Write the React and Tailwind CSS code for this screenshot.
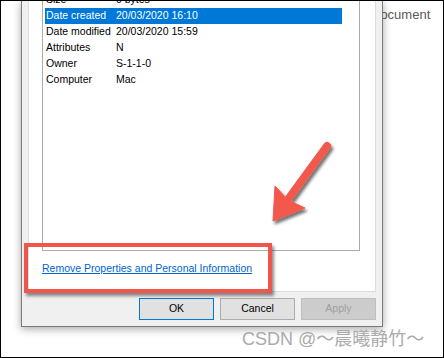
import React from "react";

const rows = [
  ["Size", "0 bytes"],
  ["Date created", "20/03/2020 16:10"],
  ["Date modified", "20/03/2020 15:59"],
  ["Attributes", "N"],
  ["Owner", "S-1-1-0"],
  ["Computer", "Mac"],
];

/* ------------------------------ Dialog button ------------------------------ */
function DialogButton({ children, variant }) {
  const styles = {
    default: "border-[#0078d7] bg-[#e1e1e1] text-black",
    normal: "border-[#adadad] bg-[#e1e1e1] text-black",
    disabled: "border-[#bfbfbf] bg-[#cccccc] text-[#a0a0a0]",
  };
  return (
    <button
      type="button"
      className={`flex h-[22px] w-[75px] items-center justify-center border text-[10.5px] ${styles[variant]}`}
    >
      {children}
    </button>
  );
}

/* ------------------------------ Arrow overlay ------------------------------ */
const Arrow = () => (
  <svg
    viewBox="0 0 444 358"
    className="pointer-events-none absolute -left-px -top-px z-20 h-[358px] w-[444px]"
  >
    <defs>
      <filter id="arrowShadow" x="-20%" y="-20%" width="140%" height="140%">
        <feDropShadow dx="2" dy="3" stdDeviation="1.4" floodColor="#000" floodOpacity="0.55" />
      </filter>
    </defs>
    <g filter="url(#arrowShadow)" fill="#f2594b" stroke="#f2594b">
      <line x1="327" y1="146" x2="289" y2="198" strokeWidth="8" strokeLinecap="round" />
      <polygon points="273,221 275,186 288,200 305,208" strokeWidth="1" strokeLinejoin="round" />
    </g>
  </svg>
);

export default function App() {
  return (
    <div className="relative flex h-[358px] w-[444px] overflow-hidden border border-black bg-white font-['Liberation_Sans',Arial,sans-serif]">
      <div className="w-[20px] shrink-0" />

      {/* Properties dialog */}
      <div className="relative z-10 flex h-[326px] w-[362px] shrink-0 flex-col border-x border-b border-[#7a7a7a] bg-[#f0f0f0] pl-[6px] pr-[6px] shadow-[0_2px_8px_rgba(0,0,0,0.35)]">
        {/* Tab page */}
        <div className="flex h-[291px] flex-col border-x border-b border-[#dcdcdc] bg-white">
          <div className="ml-[13px] h-[250px] w-[318px] overflow-hidden border-x border-b border-[#acacac] bg-white">
            <div className="-mt-[9px] flex flex-col">
              {rows.map(([label, value]) => {
                const selected = label === "Date created";
                return (
                  <div
                    key={label}
                    className={`ml-[2px] flex h-[16px] w-[297px] items-center text-[10.5px] ${
                      selected ? "bg-[#0078d7] text-white" : "text-black"
                    }`}
                  >
                    <span className="w-[71px] shrink-0 pl-[1px]">{label}</span>
                    <span>{value}</span>
                  </div>
                );
              })}
            </div>
          </div>

          <div className="mt-[10px] pl-[13px] text-[10.5px] leading-[14px]">
            <a href="#" className="text-[#0066cc] underline underline-offset-[1px]">
              Remove Properties and Personal Information
            </a>
          </div>
        </div>

        {/* Buttons */}
        <div className="mt-[6px] flex justify-end gap-[6px]">
          <DialogButton variant="default">OK</DialogButton>
          <DialogButton variant="normal">Cancel</DialogButton>
          <DialogButton variant="disabled">Apply</DialogButton>
        </div>
      </div>

      {/* Window behind the dialog */}
      <div className="flex-1">
        <div className="-ml-[12px] mt-[6px] text-[13px] leading-[15px] text-[#5a5a5a]">Document</div>
      </div>

      {/* Red highlight box */}
      <div className="pointer-events-none absolute left-[23px] top-[242px] z-20 h-[50px] w-[248px] border-4 border-[#f0564a] shadow-[2px_3px_3px_rgba(0,0,0,0.45)]" />

      <Arrow />

      {/* Watermark */}
      <div className="pointer-events-none absolute left-[241px] top-[326px] z-30 whitespace-nowrap font-['Liberation_Sans','Noto_Sans_CJK_SC',sans-serif] text-[18px] leading-[24px] text-[#ababab]">
        CSDN @～晨曦静竹～
      </div>
    </div>
  );
}
